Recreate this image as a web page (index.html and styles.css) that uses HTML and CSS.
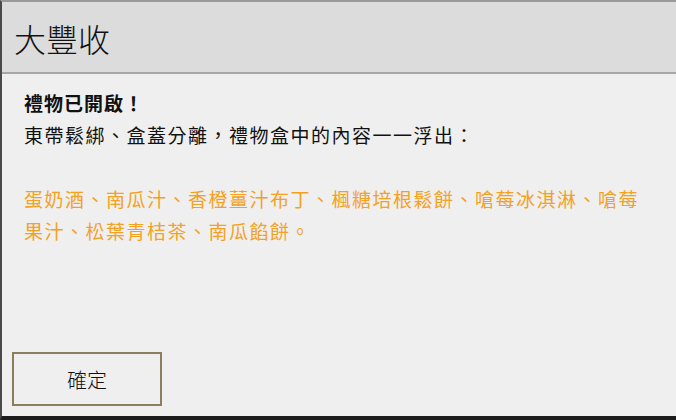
FILE: index.html
```html
<!DOCTYPE html>
<html lang="zh-Hant">
<head>
    <meta charset="utf-8">
    <title>大豐收</title>
    <link rel="stylesheet" href="styles.css">
</head>
<body>

<div class="dialog">
    <div class="dialog-header">大豐收</div>
    <div class="dialog-body">
        <p class="title">禮物已開啟！</p>
        <p>東帶鬆綁、盒蓋分離，禮物盒中的內容一一浮出：</p>
        <p class="items">蛋奶酒、南瓜汁、香橙薑汁布丁、楓糖培根鬆餅、嗆莓冰淇淋、嗆莓果汁、松葉青桔茶、南瓜餡餅。</p>
    </div>
    <div class="dialog-footer">
        <button class="btn">確定</button>
    </div>
</div>

</body>
</html>
```

FILE: styles.css
```css
* {
    margin: 0;
    padding: 0;
    box-sizing: border-box;
}

body {
    background-color: #efefef;
    font-family: "Noto Sans CJK TC", "Noto Sans", sans-serif;
    color: #111;
}

.dialog {
    display: flex;
    flex-direction: column;
    height: 420px;
    border-top: 2px solid #9a9a9a;
    border-left: 2px solid #4a4a4a;
    border-bottom: 4px solid #1c1c1c;
}

.dialog-header {
    height: 72px;
    padding: 12px 0 0 12px;
    background-color: #dcdcdc;
    border-bottom: 2px solid #a8a8a8;
    font-size: 32px;
    font-weight: 300;
    line-height: 48px;
}

.dialog-body {
    flex: 1;
    padding: 13px 24px 0 22px;
    font-size: 19px;
    line-height: 32px;
    letter-spacing: 1.5px;
}

.title {
    font-weight: bold;
    letter-spacing: 1px;
}

.items {
    margin-top: 32px;
    color: #f4a11f;
}

.dialog-footer {
    padding: 0 0 10px 10px;
}

.btn {
    width: 150px;
    height: 54px;
    background-color: #efefef;
    border: 2px solid #8c7e5c;
    font-family: "Noto Sans CJK TC", sans-serif;
    font-size: 20px;
    font-weight: 300;
    color: #111;
}
```
